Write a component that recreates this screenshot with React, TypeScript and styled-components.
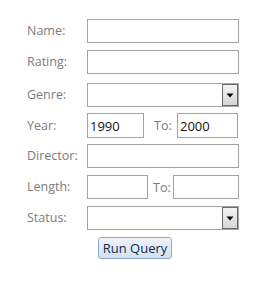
import styled, { createGlobalStyle } from "styled-components";

const Global = createGlobalStyle`
  body {
    margin: 0;
    background: #fff;
    font-family: "Open Sans", "DejaVu Sans", sans-serif;
  }
`;

const Form = styled.div`
  width: 279px;
  height: 283px;
  padding: 19px 0 0 27px;
  box-sizing: border-box;
  display: flex;
  flex-direction: column;
`;

const Row = styled.div<{ $gap: number; $h?: number }>`
  display: flex;
  align-items: center;
  height: ${(p) => p.$h ?? 24}px;
  margin-top: ${(p) => p.$gap}px;
`;

const Label = styled.span`
  width: 60px;
  flex-shrink: 0;
  color: #7c7c7c;
  font-size: 12.5px;
  line-height: 16px;
`;

const Field = styled.div<{ $w: number }>`
  width: ${(p) => p.$w}px;
  height: 100%;
  flex-shrink: 0;
  box-sizing: border-box;
  border: 1px solid #a3a3a3;
  background: #fff;
  display: flex;
  align-items: center;
  justify-content: space-between;
  padding-left: 2px;
  color: #111;
  font-size: 13px;
`;

const To = styled.span<{ $w: number; $ml: number }>`
  width: ${(p) => p.$w}px;
  margin-left: ${(p) => p.$ml}px;
  flex-shrink: 0;
  white-space: nowrap;
  color: #7c7c7c;
  font-size: 12.5px;
`;

const DropBtn = styled.div`
  width: 16px;
  height: 22px;
  box-sizing: border-box;
  border: 1px solid #6a6a6a;
  background: linear-gradient(#f4f4f4, #d6d6d6);
  display: flex;
  align-items: center;
  justify-content: center;
`;

const Button = styled.div`
  margin: 7px 0 0 71px;
  width: 74px;
  height: 22px;
  box-sizing: border-box;
  border: 1px solid #93a8c4;
  border-radius: 3px;
  background: linear-gradient(#eef4fc, #cfe0f5);
  color: #1e2a3a;
  font-size: 13px;
  display: flex;
  align-items: center;
  justify-content: center;
`;

const Arrow = () => (
  <svg width="8" height="6" viewBox="0 0 8 6">
    <path d="M0.5 1.5 H7.5 L4 5.5 Z" fill="#000" />
  </svg>
);

export default function App() {
  return (
    <>
      <Global />
      <Form>
        <Row $gap={0}>
          <Label>Name:</Label>
          <Field $w={152} />
        </Row>
        <Row $gap={7}>
          <Label>Rating:</Label>
          <Field $w={152} />
        </Row>
        <Row $gap={9}>
          <Label>Genre:</Label>
          <Field $w={152}>
            <span />
            <DropBtn>
              <Arrow />
            </DropBtn>
          </Field>
        </Row>
        <Row $gap={6} $h={25}>
          <Label>Year:</Label>
          <Field $w={57}>1990</Field>
          <To $w={23} $ml={10}>To:</To>
          <Field $w={61}>2000</Field>
        </Row>
        <Row $gap={6}>
          <Label>Director:</Label>
          <Field $w={152} />
        </Row>
        <Row $gap={7}>
          <Label>Length:</Label>
          <Field $w={61} />
          <To $w={20} $ml={5}>To:</To>
          <Field $w={66} />
        </Row>
        <Row $gap={7}>
          <Label>Status:</Label>
          <Field $w={152}>
            <span />
            <DropBtn>
              <Arrow />
            </DropBtn>
          </Field>
        </Row>
        <Button>Run Query</Button>
      </Form>
    </>
  );
}
